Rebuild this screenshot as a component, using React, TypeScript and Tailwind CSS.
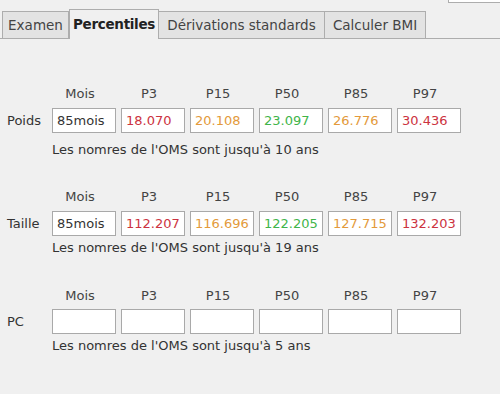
const FONT = "font-['DejaVu_Sans','Liberation_Sans',sans-serif]";

type Cell = { value: string; color: string };

const HEADERS = ['Mois', 'P3', 'P15', 'P50', 'P85', 'P97'];

const RED = 'text-[#cc3340]';
const ORANGE = 'text-[#e39a3b]';
const GREEN = 'text-[#3fb54a]';

const poids: Cell[] = [
  { value: '85mois', color: 'text-[#333333]' },
  { value: '18.070', color: RED },
  { value: '20.108', color: ORANGE },
  { value: '23.097', color: GREEN },
  { value: '26.776', color: ORANGE },
  { value: '30.436', color: RED },
];

const taille: Cell[] = [
  { value: '85mois', color: 'text-[#333333]' },
  { value: '112.207', color: RED },
  { value: '116.696', color: ORANGE },
  { value: '122.205', color: GREEN },
  { value: '127.715', color: ORANGE },
  { value: '132.203', color: RED },
];

const empty: Cell[] = HEADERS.map(() => ({ value: '', color: '' }));

function Tabs() {
  return (
    <div className="flex items-end pl-[2px] pt-[9px] border-b border-[#adadad] h-[39px] text-[13.5px]">
      <div className="w-[67px] h-[27px] bg-[#e3e3e3] border border-b-0 border-[#adadad] text-[#444] flex items-center justify-center">
        Examen
      </div>
      <div className="w-[90px] h-[30px] -mb-px bg-[#f0f0f0] border border-b-0 border-[#adadad] text-[#222] font-bold flex items-center justify-center tracking-[-0.3px]">
        Percentiles
      </div>
      <div className="w-[166px] h-[27px] bg-[#e3e3e3] border border-b-0 border-l-0 border-[#adadad] text-[#444] flex items-center justify-center">
        Dérivations standards
      </div>
      <div className="w-[101px] h-[27px] bg-[#e3e3e3] border border-b-0 border-l-0 border-[#adadad] text-[#444] flex items-center justify-center">
        Calculer BMI
      </div>
    </div>
  );
}

function Group({
  label,
  cells,
  note,
  className,
  boxGap,
  noteGap,
}: {
  label: string;
  cells: Cell[];
  note: string;
  className: string;
  boxGap: string;
  noteGap: string;
}) {
  return (
    <div className={className}>
      <div className="flex pl-[52px] gap-[5px] h-[16px] leading-[16px] text-[#444]">
        {HEADERS.map((h) => (
          <div key={h} className="w-[64px] text-center pr-[8px]">
            {h}
          </div>
        ))}
      </div>
      <div className={`flex items-center ${boxGap}`}>
        <div className="w-[52px] pl-[7px] text-[#333]">{label}</div>
        <div className="flex gap-[5px]">
          {cells.map((c, i) => (
            <div
              key={i}
              className={`w-[64px] h-[25px] bg-white border border-[#a9a9a9] pl-[4px] flex items-center whitespace-nowrap overflow-hidden ${c.color}`}
            >
              {c.value}
            </div>
          ))}
        </div>
      </div>
      <div className={`pl-[52px] h-[16px] leading-[16px] text-[#333] ${noteGap}`}>{note}</div>
    </div>
  );
}

export default function App() {
  return (
    <div className={`relative w-[500px] h-[394px] overflow-hidden bg-[#f0f0f0] text-[13px] ${FONT}`}>
      <div className="absolute top-0 right-0 w-[52px] h-[3px] bg-white border-l border-b border-[#adadad]" />
      <Tabs />
      <Group
        label="Poids"
        cells={poids}
        note="Les nomres de l'OMS sont jusqu'à 10 ans"
        className="mt-[47px]"
        boxGap="mt-[6px]"
        noteGap="mt-[9px]"
      />
      <Group
        label="Taille"
        cells={taille}
        note="Les nomres de l'OMS sont jusqu'à 19 ans"
        className="mt-[31px]"
        boxGap="mt-[6px]"
        noteGap="mt-[4px]"
      />
      <Group
        label="PC"
        cells={empty}
        note="Les nomres de l'OMS sont jusqu'à 5 ans"
        className="mt-[32px]"
        boxGap="mt-[5px]"
        noteGap="mt-[4px]"
      />
    </div>
  );
}
